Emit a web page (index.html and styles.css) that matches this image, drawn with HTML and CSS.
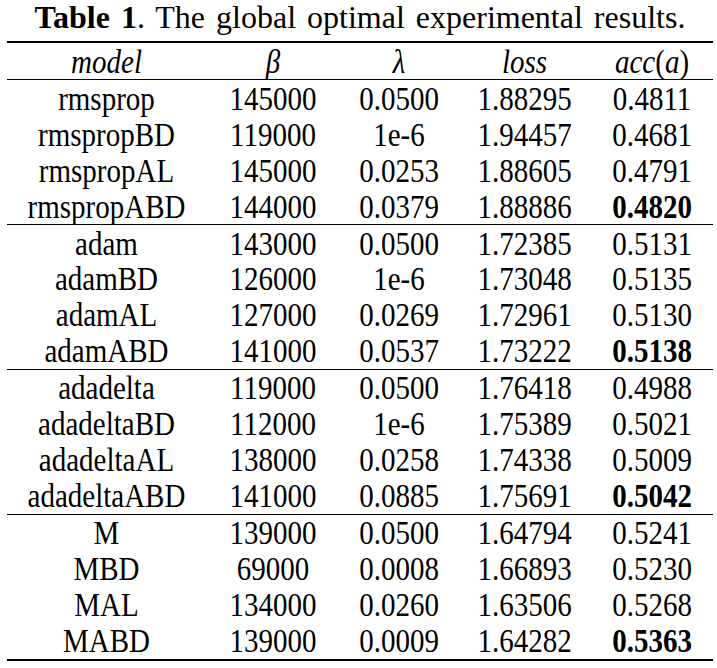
FILE: index.html
```html
<!DOCTYPE html>
<html>
<head>
<meta charset="utf-8">
<link rel="stylesheet" href="styles.css">
</head>
<body>
<div class="page">
  <div class="caption"><b>Table 1</b>. The global optimal experimental results.</div>
  <div class="table">
    <div class="row head">
      <div class="c"><i>model</i></div>
      <div class="c"><i>β</i></div>
      <div class="c"><i>λ</i></div>
      <div class="c"><i>loss</i></div>
      <div class="c"><i>acc</i>(<i>a</i>)</div>
    </div>
    <div class="group">
      <div class="row"><div class="c">rmsprop</div><div class="c">145000</div><div class="c">0.0500</div><div class="c">1.88295</div><div class="c">0.4811</div></div>
      <div class="row"><div class="c">rmspropBD</div><div class="c">119000</div><div class="c">1e-6</div><div class="c">1.94457</div><div class="c">0.4681</div></div>
      <div class="row"><div class="c">rmspropAL</div><div class="c">145000</div><div class="c">0.0253</div><div class="c">1.88605</div><div class="c">0.4791</div></div>
      <div class="row"><div class="c">rmspropABD</div><div class="c">144000</div><div class="c">0.0379</div><div class="c">1.88886</div><div class="c best">0.4820</div></div>
    </div>
    <div class="group">
      <div class="row"><div class="c">adam</div><div class="c">143000</div><div class="c">0.0500</div><div class="c">1.72385</div><div class="c">0.5131</div></div>
      <div class="row"><div class="c">adamBD</div><div class="c">126000</div><div class="c">1e-6</div><div class="c">1.73048</div><div class="c">0.5135</div></div>
      <div class="row"><div class="c">adamAL</div><div class="c">127000</div><div class="c">0.0269</div><div class="c">1.72961</div><div class="c">0.5130</div></div>
      <div class="row"><div class="c">adamABD</div><div class="c">141000</div><div class="c">0.0537</div><div class="c">1.73222</div><div class="c best">0.5138</div></div>
    </div>
    <div class="group">
      <div class="row"><div class="c">adadelta</div><div class="c">119000</div><div class="c">0.0500</div><div class="c">1.76418</div><div class="c">0.4988</div></div>
      <div class="row"><div class="c">adadeltaBD</div><div class="c">112000</div><div class="c">1e-6</div><div class="c">1.75389</div><div class="c">0.5021</div></div>
      <div class="row"><div class="c">adadeltaAL</div><div class="c">138000</div><div class="c">0.0258</div><div class="c">1.74338</div><div class="c">0.5009</div></div>
      <div class="row"><div class="c">adadeltaABD</div><div class="c">141000</div><div class="c">0.0885</div><div class="c">1.75691</div><div class="c best">0.5042</div></div>
    </div>
    <div class="group last">
      <div class="row"><div class="c">M</div><div class="c">139000</div><div class="c">0.0500</div><div class="c">1.64794</div><div class="c">0.5241</div></div>
      <div class="row"><div class="c">MBD</div><div class="c">69000</div><div class="c">0.0008</div><div class="c">1.66893</div><div class="c">0.5230</div></div>
      <div class="row"><div class="c">MAL</div><div class="c">134000</div><div class="c">0.0260</div><div class="c">1.63506</div><div class="c">0.5268</div></div>
      <div class="row"><div class="c">MABD</div><div class="c">139000</div><div class="c">0.0009</div><div class="c">1.64282</div><div class="c best">0.5363</div></div>
    </div>
  </div>
</div>
</body>
</html>
```

FILE: styles.css
```css
html, body {
  margin: 0;
  padding: 0;
  background: #fff;
}
body {
  font-family: "Liberation Serif", Tinos, "Times New Roman", serif;
  color: #000;
}
.page {
  width: 717px;
  height: 668px;
  padding: 0 4px 0 7px;
  box-sizing: border-box;
}
.caption {
  height: 41px;
  font-size: 32px;
  line-height: 35px;
  text-align: center;
  word-spacing: 3px;
  white-space: nowrap;
}
.caption b {
  font-weight: bold;
}
.table {
  width: 706px;
  border-top: 2px solid #000;
  border-bottom: 2px solid #000;
}
.row {
  display: grid;
  grid-template-columns: 199px 134px 118px 133px 122px;
  height: 36px;
  font-size: 29px;
  line-height: 36px;
}
.row.head {
  border-bottom: 1px solid #000;
}
.group {
  border-bottom: 1.5px solid #000;
}
.group.last {
  border-bottom: none;
}
.c {
  text-align: center;
  white-space: nowrap;
  transform: scaleY(1.15);
}
.head i {
  font-style: italic;
}
.best {
  font-weight: bold;
}
```
